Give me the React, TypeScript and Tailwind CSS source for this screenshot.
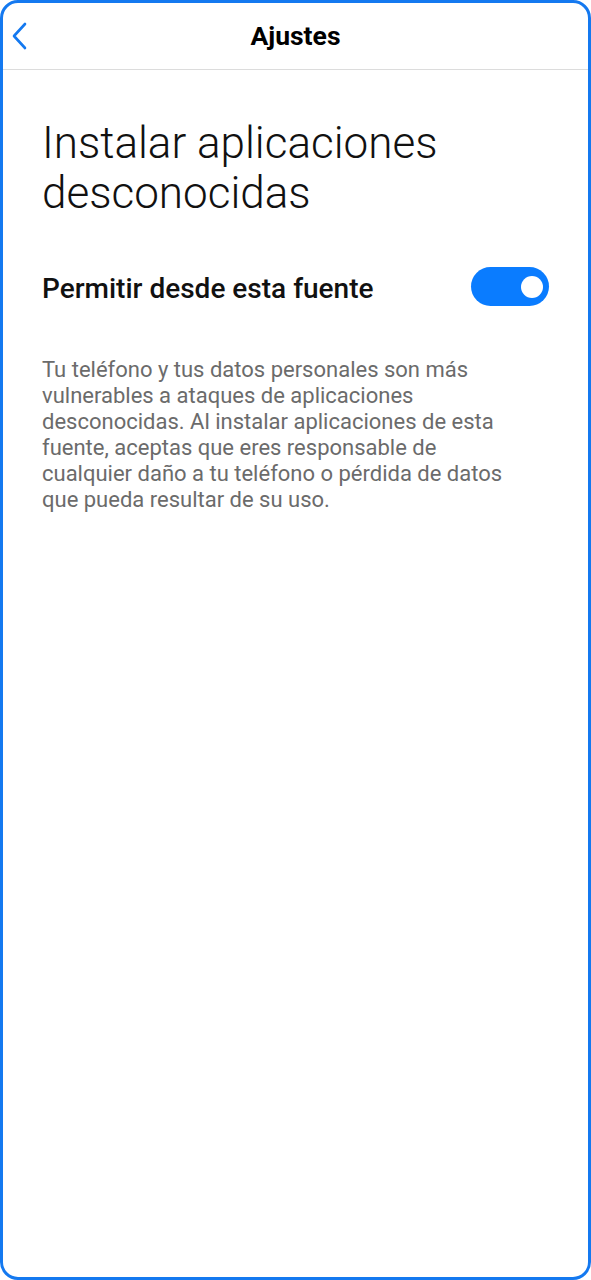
export default function App() {
  return (
    <div className="h-[1280px] w-[591px] bg-white" style={{ fontFamily: "Roboto, 'Noto Sans', sans-serif" }}>
      <div className="flex h-full flex-col overflow-hidden rounded-[18px] border-[3px] border-[#1479f0] bg-white">
        <div className="relative flex h-[67px] shrink-0 items-center justify-center border-b border-[#dcdcdc]">
          <button className="absolute left-[6px] top-[17px] text-[#1479f0]">
            <svg width="22" height="32" viewBox="0 0 22 32" fill="none">
              <path d="M16 4 L5 16 L16 28" stroke="currentColor" strokeWidth="2.6" strokeLinecap="round" strokeLinejoin="round" />
            </svg>
          </button>
          <h1 className="text-[26.5px] font-bold text-black">Ajustes</h1>
        </div>
        <div className="px-[39px] pt-[48px]">
          <h2 className="text-[44px] font-light leading-[50px] text-[#111]">Instalar aplicaciones desconocidas</h2>
          <div className="mt-[49px] flex h-[39px] items-center justify-between">
            <span className="pt-[4px] text-[28px] font-medium text-[#111]">Permitir desde esta fuente</span>
            <div className="flex h-[39px] w-[78px] items-center justify-end rounded-full bg-[#0a7cff] pr-[6px]">
              <div className="h-[22px] w-[22px] rounded-full bg-white" />
            </div>
          </div>
          <p className="mt-[51px] max-w-[475px] text-[22px] leading-[26px] text-[#6b6b6b]">
            Tu teléfono y tus datos personales son más vulnerables a ataques de aplicaciones desconocidas. Al instalar aplicaciones de esta fuente, aceptas que eres responsable de cualquier daño a tu teléfono o pérdida de datos que pueda resultar de su uso.
          </p>
        </div>
      </div>
    </div>
  );
}
